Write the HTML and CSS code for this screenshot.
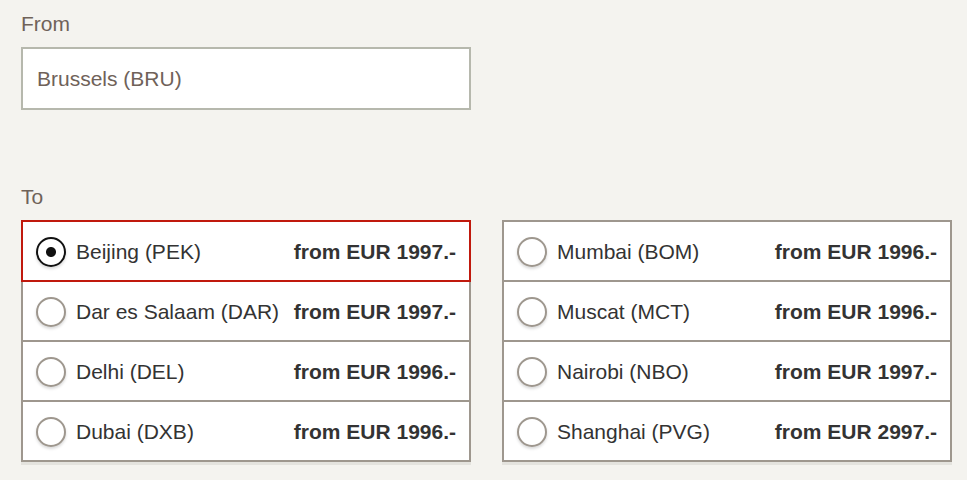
FILE: index.html
```html
<html>
  <head>
    <title>Choose your flight</title>
    <link rel="stylesheet" href="styles.css">
  </head>
  <body>
    <form class="booking">
      <label class="field-label" for="from">From</label>
      <input class="from-input" id="from" value="Brussels (BRU)" readonly />

      <div class="field-label to-label">To</div>
      <div class="destinations">
        <div class="dest-list">
          <label class="dest selected"><input type="radio" name="to" checked /><span class="city">Beijing (PEK)</span><span class="price">from EUR 1997.-</span></label>
          <label class="dest"><input type="radio" name="to" /><span class="city">Dar es Salaam (DAR)</span><span class="price">from EUR 1997.-</span></label>
          <label class="dest"><input type="radio" name="to" /><span class="city">Delhi (DEL)</span><span class="price">from EUR 1996.-</span></label>
          <label class="dest"><input type="radio" name="to" /><span class="city">Dubai (DXB)</span><span class="price">from EUR 1996.-</span></label>
        </div>
        <div class="dest-list">
          <label class="dest"><input type="radio" name="to" /><span class="city">Mumbai (BOM)</span><span class="price">from EUR 1996.-</span></label>
          <label class="dest"><input type="radio" name="to" /><span class="city">Muscat (MCT)</span><span class="price">from EUR 1996.-</span></label>
          <label class="dest"><input type="radio" name="to" /><span class="city">Nairobi (NBO)</span><span class="price">from EUR 1997.-</span></label>
          <label class="dest"><input type="radio" name="to" /><span class="city">Shanghai (PVG)</span><span class="price">from EUR 2997.-</span></label>
        </div>
      </div>
    </form>
  </body>
</html>
```

FILE: styles.css
```css
* {box-sizing: border-box;}
body {margin: 0; background: #f4f3ef; font-family: "Liberation Sans", Arial, sans-serif; font-size: 21px; color: #333;}
.booking {padding: 12px 0 0 21px;}
.field-label {display: block; line-height: 24px; color: #6f6259; margin-bottom: 11px;}
.to-label {margin-top: 75px;}
.from-input {display: block; width: 450px; height: 63px; border: 2px solid #b6b8ad; background: #fff; padding: 0 14px;
  font-family: inherit; font-size: 21px; color: #6f6259; outline: none;}

.destinations {display: flex; gap: 31px;}
.dest-list {flex: none; width: 450px; display: flex; flex-direction: column; box-shadow: 0 3px 0 #e4e3de;}
.dest {position: relative; display: flex; align-items: center; height: 62px; margin-top: -2px; padding: 1px 13px 0;
  background: #fff; border: 2px solid #9e978e; cursor: pointer;}
.dest:first-child {margin-top: 0;}
.dest.selected {border-color: #c0190d; z-index: 1;}
.dest input {appearance: none; -webkit-appearance: none; width: 30px; height: 30px; margin: 0 10px 0 0; flex: none;
  border: 2px solid #9e978e; border-radius: 50%; background: #fff; box-shadow: 0 2px 3px rgba(0,0,0,.15);}
.dest input:checked {border-color: #111; background: radial-gradient(circle, #111 0, #111 4.5px, #fff 5.5px);}
.city {flex: 1;}
.price {font-weight: bold;}
```
